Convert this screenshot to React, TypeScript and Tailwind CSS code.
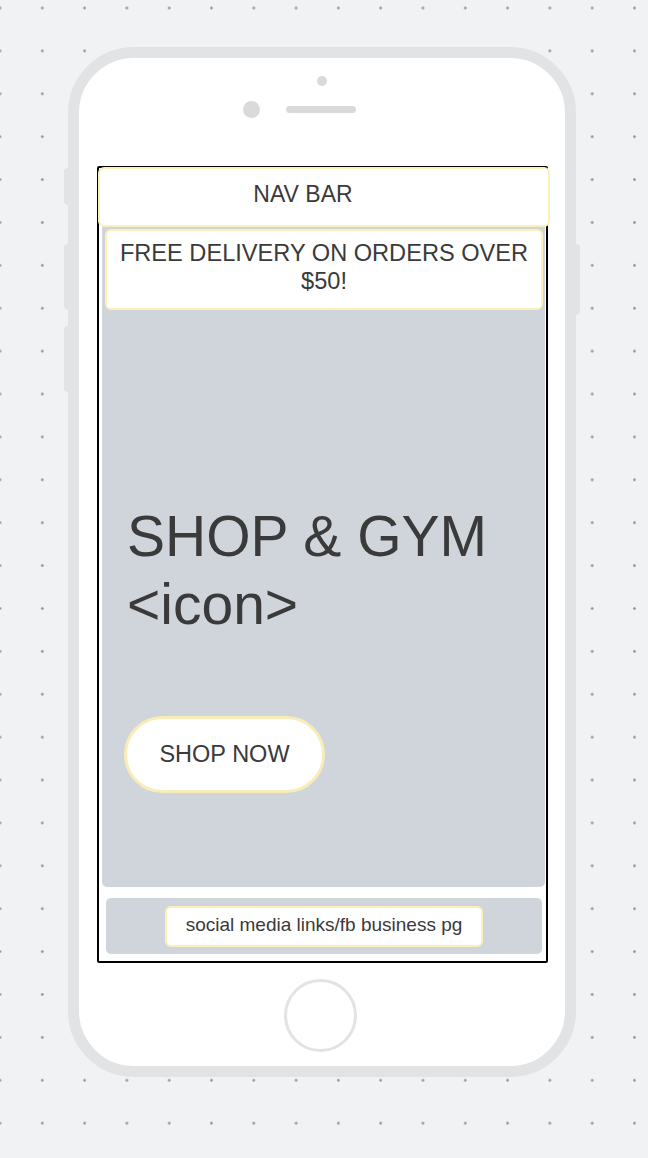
export default function App() {
  return (
    <main className="w-full h-[1158px] overflow-hidden bg-[#f1f2f4] bg-[radial-gradient(circle,#9a9a9a_1px,transparent_1.6px)] bg-size-[42.3px_42.9px] bg-position-[-21.15px_-13.45px] font-['Liberation_Sans',Arial,sans-serif] text-[#3a3a3a]">
      <div className="pt-[47px] pl-[68px]">
        {/* phone body */}
        <div className="relative w-[508px] h-[1030px] rounded-[66px] border-[11px] border-[#e2e3e5] bg-white">
          {/* side buttons */}
          <div className="absolute left-[-15px] top-[110px] w-[4px] h-[37px] rounded-l-sm bg-[#e2e3e5]" />
          <div className="absolute left-[-15px] top-[186px] w-[4px] h-[66px] rounded-l-sm bg-[#e2e3e5]" />
          <div className="absolute left-[-15px] top-[268px] w-[4px] h-[66px] rounded-l-sm bg-[#e2e3e5]" />
          <div className="absolute right-[-15px] top-[186px] w-[4px] h-[71px] rounded-r-sm bg-[#e2e3e5]" />

          <div className="flex flex-col items-center">
            <div className="mt-[18px] w-[10px] h-[10px] rounded-full bg-[#dadada]" />
            <div className="mt-[15px] flex items-center gap-[26px] self-stretch pl-[164px]">
              <div className="w-[17px] h-[17px] rounded-full bg-[#dadada]" />
              <div className="w-[70px] h-[7px] rounded-full bg-[#dadada]" />
            </div>

            {/* screen */}
            <div className="mt-[48px] ml-[18px] self-start w-[451px] h-[797px] border-2 border-black rounded-[2px] flex flex-col">
              <div className="-mt-[1px] -ml-[1px] -mr-[4px] h-[60px] rounded-md border-[2.5px] border-[#fbf0b9] bg-white flex items-center justify-center pr-[42px] pb-[6px] text-[23px]">
                NAV BAR
              </div>

              <div className="ml-[3px] mr-[1px] h-[660px] rounded-b-[5px] bg-[#d0d4db] flex flex-col">
                <div className="mt-[2px] ml-[3px] mr-[2px] h-[81px] rounded-md border-[2.5px] border-[#fbf0b9] bg-white pt-[8px] text-center text-[23.6px] leading-[28px]">
                  FREE DELIVERY ON ORDERS OVER
                  <br />
                  $50!
                </div>
                <h1 className="mt-[192px] pl-[25px] text-[57px] leading-[68px]">
                  SHOP &amp; GYM
                  <br />
                  &lt;icon&gt;
                </h1>
                <div className="mt-[78px] pl-[22px]">
                  <button className="w-[201px] h-[77px] rounded-full border-[3px] border-[#f8edb8] bg-white text-[23.5px] text-[#3a3a3a]">
                    SHOP NOW
                  </button>
                </div>
              </div>

              <div className="mt-[11px] ml-[7px] mr-[4px] h-[56px] rounded-[5px] bg-[#d0d4db] flex items-center justify-center">
                <div className="w-[318px] h-[41px] rounded-md border-[2.5px] border-[#fbf0b9] bg-white flex items-center justify-center pb-[2px] text-[19px]">
                  social media links/fb business pg
                </div>
              </div>
            </div>

            {/* home button */}
            <div className="mt-[16px] -ml-[3px] w-[73px] h-[73px] rounded-full border-[3px] border-[#e3e3e3]" />
          </div>
        </div>
      </div>
    </main>
  );
}
